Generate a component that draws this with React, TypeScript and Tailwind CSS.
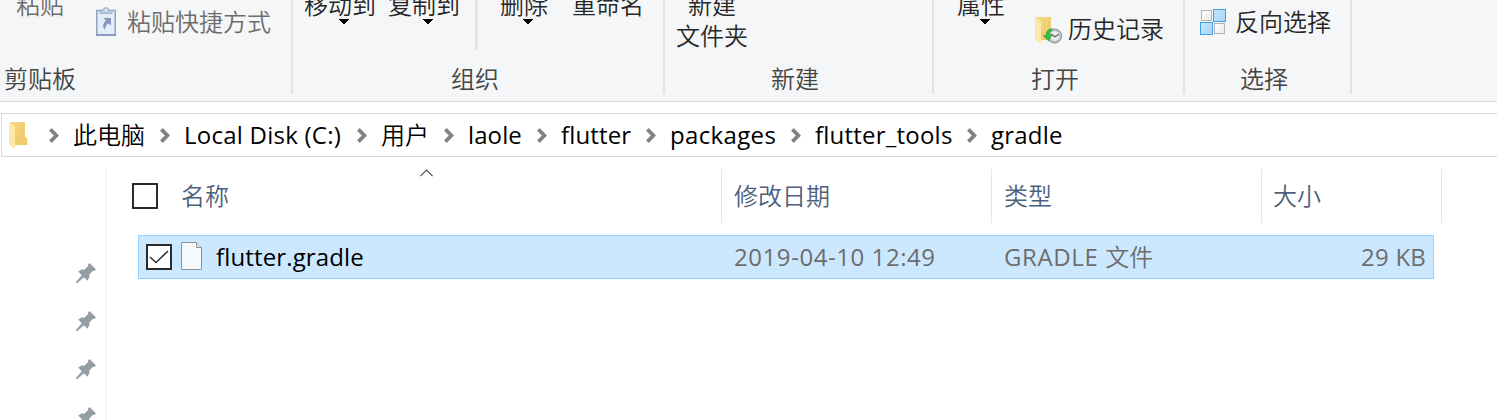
import type { ReactNode } from "react";

const ui = "font-['Open_Sans','Noto_Sans_CJK_SC',sans-serif]";
const cjk = "font-['Noto_Sans_CJK_SC',sans-serif] font-[350] text-[24px] leading-[28px] whitespace-nowrap";

function DropArrow({ className }: { className: string }) {
  return (
    <svg className={`block ${className}`} width="10" height="5" viewBox="0 0 10 5" shapeRendering="crispEdges">
      <path d="M0 0H10L5.5 5H4.5Z" fill="#000" />
    </svg>
  );
}

function FolderShape() {
  return (
    <>
      <path d="M1 0H16V14.5L18.3 16.5V23H3Z" fill="url(#folderBack)" />
      <path d="M0 0L6 4.5V27L0 22.5Z" fill="#ffe8a6" />
    </>
  );
}

function FolderIcon() {
  return (
    <svg className="block" width="19" height="27" viewBox="0 0 19 27">
      <defs>
        <linearGradient id="folderBack" x1="0" y1="0" x2="1" y2="1">
          <stop offset="0" stopColor="#f4d88a" />
          <stop offset=".5" stopColor="#f0cf74" />
          <stop offset="1" stopColor="#eecb66" />
        </linearGradient>
      </defs>
      <FolderShape />
    </svg>
  );
}

function HistoryIcon() {
  return (
    <svg className="block" width="28" height="28" viewBox="0 0 28 28">
      <FolderShape />
      <circle cx="19.7" cy="19" r="6.8" fill="#d0d4d6" stroke="#9a9fa1" strokeWidth="1.4" />
      <circle cx="19.7" cy="19" r="4.9" fill="#e9ebec" stroke="#a3a9ab" strokeWidth="1" strokeDasharray="1 1.4" />
      <path d="M15.8 17L20 19.8L23.7 17.2" fill="none" stroke="#5a5e60" strokeWidth="1.2" />
      <path d="M16.5 11.6C12.6 12.4 11 15 11.3 18.3L8.3 18.8L13.6 24L17.2 17.6L14.6 18C14.2 15.8 15 14.3 17 13.4Z" fill="#2fc040" stroke="#1f9c30" strokeWidth=".5" />
    </svg>
  );
}

function ShortcutIcon() {
  return (
    <svg className="block" width="20" height="29" viewBox="0 0 20 29">
      <rect x="0.75" y="3.5" width="18.5" height="24.5" fill="#e3ecf9" stroke="#8fa3c5" strokeWidth="1.5" />
      <path d="M0 28H20" stroke="#7f94b8" strokeWidth="1.5" />
      <path d="M4 3.5H7C7 1.8 8 .8 10 .8S13 1.8 13 3.5H16V6.5H4Z" fill="#bccade" stroke="#9dafca" strokeWidth="1" />
      <circle cx="10" cy="3" r="1.1" fill="#f0f4fa" />
      <path d="M7.5 11H15V18.7L12.5 16.3C10.2 17.8 9.3 19.4 9 22.8C6.2 20 6.6 16.3 10 13.7Z" fill="#8296bd" />
    </svg>
  );
}

function InvertIcon() {
  return (
    <svg className="block" width="26" height="26" viewBox="0 0 26 26">
      <defs>
        <linearGradient id="tileBlue" x1="0" y1="0" x2="1" y2="1">
          <stop offset="0" stopColor="#c4e5fc" />
          <stop offset="1" stopColor="#a5d7fb" />
        </linearGradient>
        <linearGradient id="tileGrey" x1="0" y1="0" x2="1" y2="1">
          <stop offset="0" stopColor="#fff" />
          <stop offset="1" stopColor="#e8e8e8" />
        </linearGradient>
      </defs>
      <rect x="1.5" y="1.5" width="10" height="10" fill="url(#tileGrey)" stroke="#b5b5b5" />
      <rect x="14.5" y="14.5" width="10" height="10" fill="url(#tileGrey)" stroke="#b5b5b5" />
      <rect x="13.5" y=".5" width="12" height="12" fill="url(#tileBlue)" stroke="#429fe6" />
      <rect x=".5" y="13.5" width="12" height="12" fill="url(#tileBlue)" stroke="#429fe6" />
    </svg>
  );
}

function Chevron() {
  return (
    <svg className="block shrink-0" width="10" height="15" viewBox="0 0 10 15">
      <path d="M1.4 1.4L7.4 7.5L1.4 13.6" fill="none" stroke="#838383" strokeWidth="3.8" />
    </svg>
  );
}

function Pin() {
  return (
    <svg className="block" width="20" height="20" viewBox="0 0 20 20">
      <path d="M13.5 0L20 6.3L18.2 8L17 7.8L13.2 11.8L13.3 14.2L11.5 17.8L7.9 14.2L1.2 20H0V18.8L5.8 12.2L2.2 8.4L5.6 6.6L8.2 6.8L12.2 3L12 1.6Z" fill="#929fa5" />
    </svg>
  );
}

function FileIcon() {
  return (
    <svg className="block" width="21" height="28" viewBox="0 0 21 28">
      <path d="M.5 .5H15.5L20.5 5.5V27.5H.5Z" fill="#f8f9fa" stroke="#8b9299" />
      <path d="M15.5 .5V5.5H20.5" fill="#dfe3e7" stroke="#8b9299" />
    </svg>
  );
}

function Group({ className, label, labelClass, children }: { className: string; label: string; labelClass: string; children: ReactNode }) {
  return (
    <div className={`flex h-[94px] shrink-0 flex-col border-r-2 border-[#e2e3e4] ${className}`}>
      <div className="flex h-[64px] items-start">{children}</div>
      <div className={`${cjk} text-[#444] ${labelClass}`}>{label}</div>
    </div>
  );
}

function Command({ className, label, arrow }: { className: string; label: string; arrow?: string }) {
  return (
    <div className={`flex shrink-0 flex-col ${className}`}>
      <span className={`${cjk} -mt-[10px]`}>{label}</span>
      {arrow && <DropArrow className={`mt-[1px] ${arrow}`} />}
    </div>
  );
}

const crumbs = [
  { text: "此电脑", className: "w-[111px] font-[350]" },
  { text: "Local Disk (C:)", className: "w-[197px] tracking-[0.24px]" },
  { text: "用户", className: "w-[87px] font-[350]" },
  { text: "laole", className: "w-[93px] tracking-[0.1px]" },
  { text: "flutter", className: "w-[109px] tracking-[0.15px]" },
  { text: "packages", className: "w-[145px] tracking-[0.35px]" },
  { text: "flutter_tools", className: "w-[176px] tracking-[0.22px]" },
  { text: "gradle", className: "w-[120px] tracking-[0.2px]" },
];

export default function App() {
  return (
    <div className={`${ui} flex h-[420px] w-[1497px] flex-col overflow-hidden bg-white text-[24px] text-black`}>
      <header className="flex h-[102px] shrink-0 overflow-hidden border-b border-[#d9dadb] bg-[#f5f6f7] text-[#262626]">
        <Group className="w-[293px]" label="剪贴板" labelClass="pl-[4px]">
          <Command className="ml-[16px] w-[80px] text-[#6d6d6d]" label="粘贴" />
          <div className="flex pt-[7px] text-[#6d6d6d]">
            <ShortcutIcon />
            <span className={`${cjk} ml-[11px]`}>粘贴快捷方式</span>
          </div>
        </Group>
        <Group className="w-[372px]" label="组织" labelClass="pl-[158px]">
          <Command className="ml-[11px] w-[84px]" label="移动到" arrow="ml-[35px]" />
          <Command className="w-[87px]" label="复制到" arrow="ml-[35px]" />
          <div className="h-[49px] w-[3px] bg-[#e2e3e4]" />
          <Command className="ml-[22px] w-[72px]" label="删除" arrow="ml-[23px]" />
          <Command className="" label="重命名" />
        </Group>
        <Group className="w-[269px]" label="新建" labelClass="pl-[106px]">
          <div className="ml-[11px] flex flex-col items-center">
            <Command className="" label="新建" />
            <span className={`${cjk} mt-[3px]`}>文件夹</span>
          </div>
        </Group>
        <Group className="w-[251px]" label="打开" labelClass="pl-[97px]">
          <Command className="ml-[23px] w-[78px]" label="属性" arrow="ml-[23px]" />
          <div className="flex pt-[17px]">
            <HistoryIcon />
            <span className={`${cjk} ml-[5px] -mt-[3px]`}>历史记录</span>
          </div>
        </Group>
        <Group className="w-[167px]" label="选择" labelClass="pl-[55px]">
          <div className="ml-[15px] flex pt-[9px]">
            <InvertIcon />
            <span className={`${cjk} ml-[9px] -mt-[2px]`}>反向选择</span>
          </div>
        </Group>
      </header>

      <nav className="ml-[1px] mt-[11px] flex h-[44px] w-[1500px] shrink-0 items-center border border-[#d9d9d9] pl-[7px]">
        <div className="w-[40px]">
          <FolderIcon />
        </div>
        {crumbs.map((c) => (
          <div key={c.text} className={`flex shrink-0 items-center gap-[14px] whitespace-nowrap ${c.className}`}>
            <Chevron />
            <span className="leading-[30px]">{c.text}</span>
          </div>
        ))}
      </nav>

      <div className="flex flex-1">
        <aside className="mt-[12px] flex w-[107px] shrink-0 flex-col items-end gap-[28px] border-r-2 border-[#f6f6f6] pr-[9px] pt-[94px]">
          <Pin />
          <Pin />
          <Pin />
          <Pin />
        </aside>
        <main className="flex-1 pt-[12px]">
          <div className={`${cjk} flex h-[54px] items-center text-[#4c607a]`}>
            <div className="relative flex h-full w-[615px] items-center border-r border-[#e5e5e5] pl-[25px]">
              <div className="h-[26px] w-[26px] border-2 border-[#2b2b2b]" />
              <span className="-mt-[2px] ml-[23px]">名称</span>
              <svg className="absolute left-[313px] top-0" width="13" height="8" viewBox="0 0 13 8">
                <path d="M.4 7.2L6.5 1L12.6 7.2" fill="none" stroke="#4b4b4b" strokeWidth="1.1" />
              </svg>
            </div>
            <div className="flex h-full w-[270px] items-center border-r border-[#e5e5e5] pb-[2px] pl-[12px]">修改日期</div>
            <div className="flex h-full w-[270px] items-center border-r border-[#e5e5e5] pb-[2px] pl-[12px]">类型</div>
            <div className="flex h-full w-[180px] items-center border-r border-[#e5e5e5] pb-[2px] pl-[11px]">大小</div>
          </div>
          <div className="ml-[31px] mt-[12px] flex h-[44px] w-[1296px] items-center whitespace-nowrap border border-[#99d1ff] bg-[#cce8ff] leading-[30px] text-[#6d6d6d]">
            <div className="ml-[7px] flex h-[26px] w-[26px] items-center justify-center border-2 border-[#2b2b2b] bg-white">
              <svg width="20" height="14" viewBox="0 0 20 14">
                <path d="M1 7L7 12.5L19 1" fill="none" stroke="#333" strokeWidth="1.6" />
              </svg>
            </div>
            <div className="-mt-[2px] ml-[9px]">
              <FileIcon />
            </div>
            <span className="ml-[14px] w-[518px] tracking-[0.14px] text-black">flutter.gradle</span>
            <span className="w-[270px] tracking-[0.56px]">2019-04-10 12:49</span>
            <span className="w-[270px]">
              <span className="tracking-[0.6px]">GRADLE </span>
              <span className="font-[350]">文件</span>
            </span>
            <span className="flex-1 pr-[7px] text-right tracking-[0.2px]">29 KB</span>
          </div>
        </main>
      </div>
    </div>
  );
}
